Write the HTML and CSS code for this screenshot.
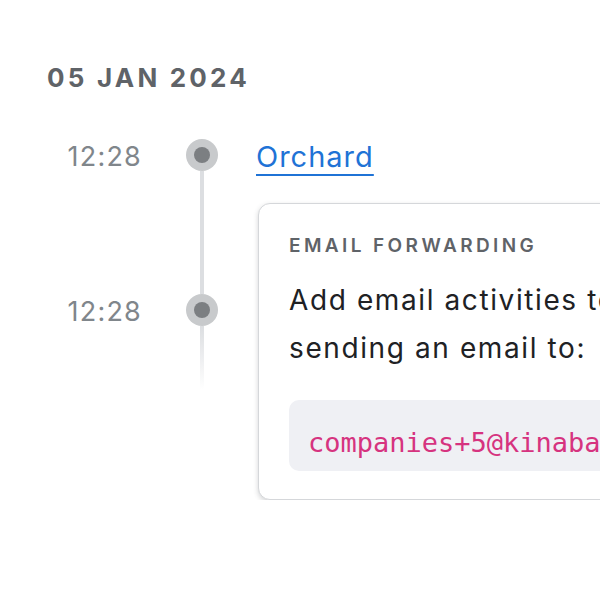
FILE: index.html
```html
<!DOCTYPE html>
<html lang="en">
<head>
  <meta charset="UTF-8">
  <meta name="viewport" content="width=device-width, initial-scale=1.0">
  <title>Activity</title>
  <link rel="stylesheet" href="styles.css">
</head>
<body>
  <div class="day">
    <h2 class="day-title">05 Jan 2024</h2>
    <div class="timeline">
      <div class="rail">
        <span class="time">12:28</span>
        <span class="dot"></span>
        <span></span>
        <span class="line"></span>
        <span class="time">12:28</span>
        <span class="dot"></span>
        <span></span>
        <span class="line fade"></span>
      </div>
      <div class="entries">
        <a class="entry-link" href="#">Orchard</a>
        <div class="card">
          <div class="card-label">Email forwarding</div>
          <p class="card-text">Add email activities to this company by sending an email to:</p>
          <div class="code-box"><code>companies+5@kinabase.com</code></div>
        </div>
      </div>
    </div>
  </div>
</body>
</html>
```

FILE: styles.css
```css
html, body {
  overflow: hidden;
}

body {
  margin: 0;
  font-family: Inter, "Noto Sans", sans-serif;
  background-color: #ffffff;
  color: #202124;
}

.day {
  padding: 62px 0 0 47px;
}

.day-title {
  margin: 0 0 45px;
  font-size: 26px;
  line-height: 32px;
  font-weight: 700;
  letter-spacing: 3.2px;
  text-transform: uppercase;
  color: #5f6368;
}

.timeline {
  display: flex;
  gap: 38px;
}

.rail {
  display: grid;
  grid-template-columns: 95px 32px;
  grid-template-rows: 32px 123px 32px 64px;
  column-gap: 44px;
  flex-shrink: 0;
}

.time {
  font-size: 27px;
  line-height: 32px;
  padding-top: 2px;
  letter-spacing: 1.2px;
  text-align: right;
  color: #80868b;
}

.dot {
  width: 32px;
  height: 32px;
  border-radius: 50%;
  background-color: #c8cacc;
  display: flex;
  align-items: center;
  justify-content: center;
}

.dot::before {
  content: "";
  width: 16px;
  height: 16px;
  border-radius: 50%;
  background-color: #7c7f82;
}

.line {
  width: 4px;
  margin: 0 auto;
  background-color: #dcdee1;
}

.line.fade {
  background: linear-gradient(#dcdee1, rgba(220, 222, 225, 0));
}

.entries {
  display: flex;
  flex-direction: column;
  align-items: flex-start;
}

.entry-link {
  font-size: 29px;
  line-height: 32px;
  padding-top: 2px;
  letter-spacing: 1px;
  color: #1f73d6;
  text-decoration: underline;
  text-decoration-thickness: 2px;
  text-underline-offset: 7px;
}

.card {
  width: 680px;
  margin: 30px 0 0 2px;
  padding: 28px 30px;
  box-sizing: border-box;
  border: 1px solid #d5d7da;
  border-radius: 12px;
  background-color: #ffffff;
  box-shadow: 0 2px 5px rgba(60, 64, 67, 0.22);
}

.card-label {
  font-size: 19px;
  line-height: 27px;
  font-weight: 600;
  letter-spacing: 3.4px;
  text-transform: uppercase;
  color: #5f6368;
}

.card-text {
  margin: 17px 0 28px;
  font-size: 28px;
  line-height: 48px;
  letter-spacing: 1.6px;
  color: #202124;
}

.code-box {
  padding: 24px 19px 10px;
  border-radius: 10px;
  background-color: #eff0f4;
}

.code-box code {
  font-family: "DejaVu Sans Mono", monospace;
  font-size: 27px;
  line-height: 37px;
  color: #d6337f;
}
```
